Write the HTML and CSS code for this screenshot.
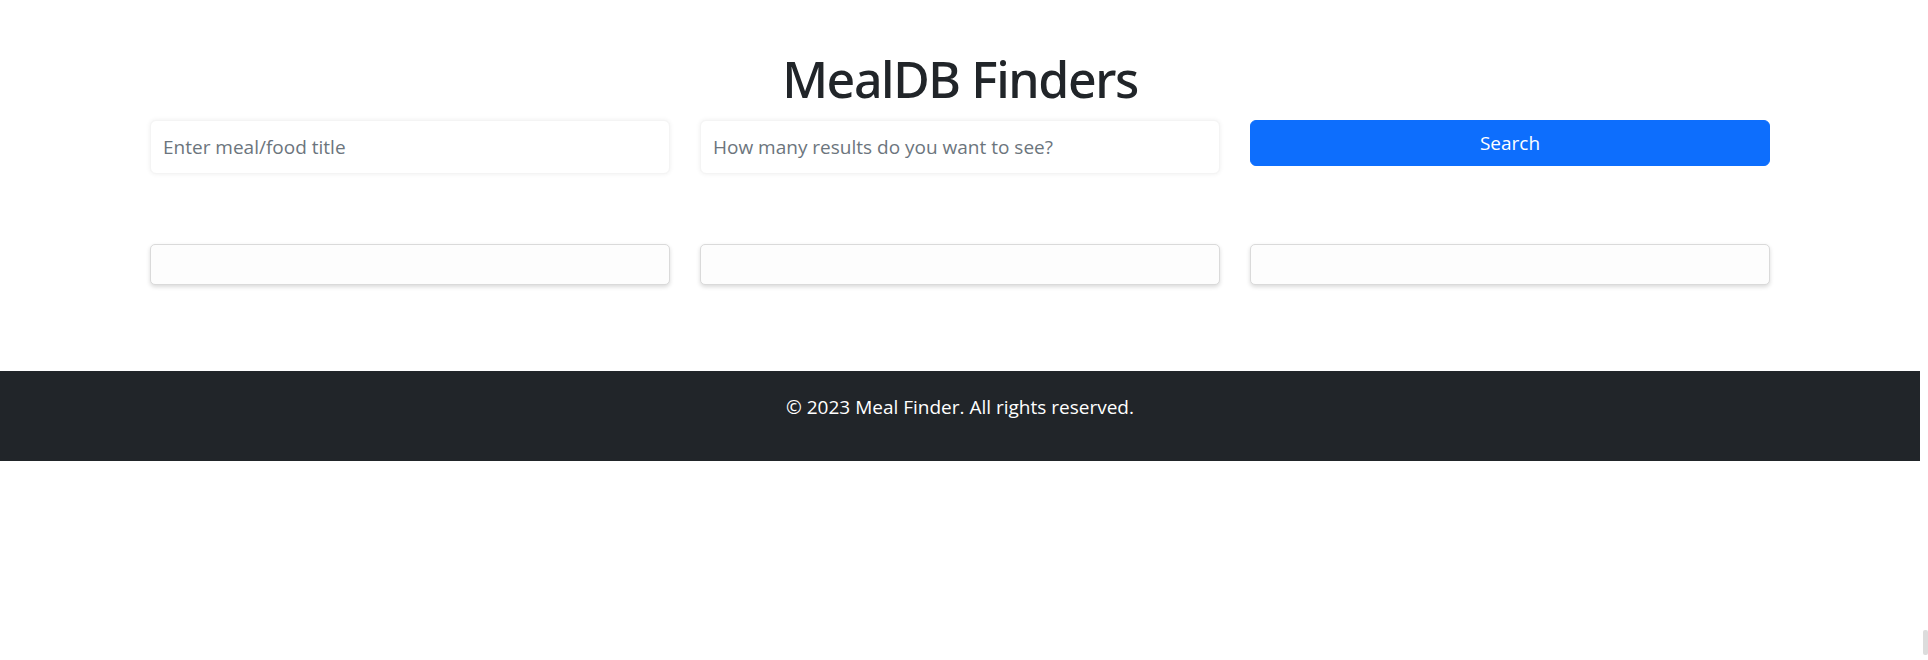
FILE: index.html
```html
<!DOCTYPE html>
<html lang="en">
<head>
<meta charset="utf-8">
<title>MealDB Finders</title>
<link rel="stylesheet" href="styles.css">
</head>
<body>
<div class="page">
  <header class="header">
    <h1 class="title">MealDB Finders</h1>
  </header>
  <main class="main">
    <form class="search-row" onsubmit="return false;">
      <input class="field" type="text" placeholder="Enter meal/food title">
      <input class="field" type="number" placeholder="How many results do you want to see?">
      <button class="search-btn" type="submit">Search</button>
    </form>
    <section class="results">
      <div class="result-card"></div>
      <div class="result-card"></div>
      <div class="result-card"></div>
    </section>
  </main>
  <footer class="footer">
    <p class="footer-text">© 2023 Meal Finder. All rights reserved.</p>
  </footer>
</div>
<div class="scroll-thumb"></div>
</body>
</html>
```

FILE: styles.css
```css
* {
  box-sizing: border-box;
}

html, body {
  margin: 0;
  padding: 0;
  background: #ffffff;
}

body {
  font-family: "Open Sans", "Noto Sans", "Liberation Sans", sans-serif;
  color: #212529;
  height: 660px;
  overflow: hidden;
}

.page {
  margin-right: 8px;
}

.header {
  display: flex;
  justify-content: center;
}

.title {
  margin: 49px 0 11px;
  font-family: "Noto Sans", "Open Sans", sans-serif;
  font-size: 50px;
  line-height: 60px;
  font-weight: 500;
  letter-spacing: -1.4px;
  color: #212529;
}

.main {
  padding: 0 150px;
}

.search-row {
  display: grid;
  grid-template-columns: repeat(3, 1fr);
  column-gap: 30px;
  align-items: start;
  margin: 0;
}

.field {
  height: 54px;
  padding: 12px 12px;
  font-family: inherit;
  font-size: 19px;
  color: #212529;
  background: #ffffff;
  border: 1px solid #f4f4f4;
  border-radius: 6px;
  box-shadow: 0 0 5px rgba(0, 0, 0, 0.07);
  outline: none;
  -moz-appearance: textfield;
}

.field::placeholder {
  color: #6c757d;
}

.field::-webkit-outer-spin-button,
.field::-webkit-inner-spin-button {
  -webkit-appearance: none;
  margin: 0;
}

.search-btn {
  height: 46px;
  font-family: inherit;
  font-size: 19px;
  color: #ffffff;
  background: #0d6efd;
  border: 1px solid #0d6efd;
  border-radius: 6px;
  cursor: pointer;
}

.results {
  display: grid;
  grid-template-columns: repeat(3, 1fr);
  column-gap: 30px;
  margin-top: 70px;
}

.result-card {
  height: 41px;
  background: #fdfdfd;
  border: 1px solid #dadada;
  border-radius: 5px;
  box-shadow: 0 2px 4px rgba(0, 0, 0, 0.15);
}

.footer {
  margin-top: 86px;
  height: 90px;
  padding-top: 23px;
  background: #212529;
  color: #ffffff;
  text-align: center;
}

.footer-text {
  margin: 0;
  font-size: 19px;
  line-height: 27px;
}

.scroll-thumb {
  position: fixed;
  right: 0;
  bottom: 5px;
  width: 5px;
  height: 25px;
  background: #dcdcdc;
  border-radius: 2px;
}
```
